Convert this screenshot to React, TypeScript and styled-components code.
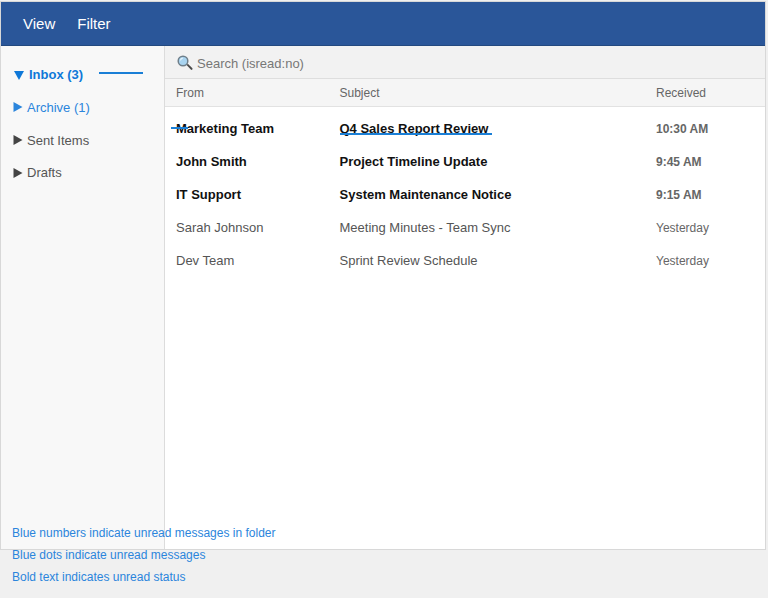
import * as React from "react";
import styled, { createGlobalStyle } from "styled-components";

const GlobalStyle = createGlobalStyle`
  html, body {
    margin: 0;
    padding: 0;
    background: #f0f0f0;
    font-family: "Liberation Sans", Arial, sans-serif;
  }
`;

const Page = styled("div")`
  position: relative;
  width: 768px;
  height: 598px;
  padding: 1px 2px 0 0;
  box-sizing: border-box;
  overflow: hidden;
`;

const Window = styled("div")`
  height: 549px;
  display: flex;
  flex-direction: column;
  background: #fff;
  border: 1px solid #d8d8d8;
  box-sizing: border-box;
`;

const Toolbar = styled("div")`
  flex: 0 0 44px;
  display: flex;
  align-items: center;
  gap: 22px;
  padding-left: 22px;
  box-sizing: border-box;
  background: #2a5699;
  border-bottom: 1px solid #23497f;
`;

const ToolbarItem = styled("span")`
  color: #fff;
  font-size: 15px;
`;

const Body = styled("div")`
  flex: 1;
  display: flex;
  min-height: 0;
`;

const Sidebar = styled("nav")`
  flex: 0 0 164px;
  padding: 12.4px 0 0 12px;
  box-sizing: border-box;
  background: #f8f8f8;
  border-right: 1px solid #dcdcdc;
`;

const Folder = styled("div")<{ $tone: "active" | "unread" | "plain" }>`
  height: 32.67px;
  display: flex;
  align-items: center;
  gap: ${({ $tone }) => ($tone === "active" ? 5 : 4)}px;
  padding-left: ${({ $tone }) => ($tone === "active" ? 1 : 0)}px;
  font-size: 13px;
  font-weight: ${({ $tone }) => ($tone === "active" ? 700 : 400)};
  color: ${({ $tone }) =>
    $tone === "active" ? "#0f78d8" : $tone === "unread" ? "#2b85dc" : "#555"};
`;

const Arrow = styled("svg")`
  width: 10px;
  height: 10px;
  flex: none;
  fill: currentColor;
`;

const PlainArrow = styled(Arrow)`
  fill: #444;
`;

const Main = styled("main")`
  flex: 1;
  display: flex;
  flex-direction: column;
  min-width: 0;
`;

const SearchBar = styled("div")`
  flex: 0 0 33px;
  display: flex;
  align-items: center;
  gap: 4px;
  padding: 2px 0 0 12px;
  box-sizing: border-box;
  background: #f2f2f2;
  border-bottom: 1px solid #dedede;
  font-size: 13px;
  color: #777;
`;

const Columns = "grid-template-columns: 163.5px 316.5px 1fr;";

const HeaderRow = styled("div")`
  flex: 0 0 28px;
  display: grid;
  ${Columns}
  align-items: center;
  padding-left: 11px;
  box-sizing: border-box;
  background: #f5f5f5;
  border-bottom: 1px solid #e2e2e2;
  font-size: 12px;
  color: #666;
`;

const MessageList = styled("div")`
  padding-top: 5px;
`;

const MessageRow = styled("div")<{ $unread: boolean }>`
  height: 33px;
  display: grid;
  ${Columns}
  align-items: center;
  padding-left: 11px;
  font-size: 13px;
  font-weight: ${({ $unread }) => ($unread ? 700 : 400)};
  color: ${({ $unread }) => ($unread ? "#111" : "#555")};
`;

const Received = styled("span")`
  font-size: 12px;
  color: #666;
`;

const Legend = styled("div")`
  position: absolute;
  left: 12px;
  top: 526px;
  display: flex;
  flex-direction: column;
  gap: 8px;
  font-size: 12px;
  line-height: 14px;
  color: #2b85dc;
`;

const Marker = styled("span")<{ $left: number; $top: number; $width: number }>`
  position: absolute;
  left: ${({ $left }) => $left}px;
  top: ${({ $top }) => $top}px;
  width: ${({ $width }) => $width}px;
  height: 2px;
  background: #1a7fd6;
`;

const folders: { label: string; tone: "active" | "unread" | "plain" }[] = [
  { label: "Inbox (3)", tone: "active" },
  { label: "Archive (1)", tone: "unread" },
  { label: "Sent Items", tone: "plain" },
  { label: "Drafts", tone: "plain" },
];

const messages = [
  { from: "Marketing Team", subject: "Q4 Sales Report Review", received: "10:30 AM", unread: true },
  { from: "John Smith", subject: "Project Timeline Update", received: "9:45 AM", unread: true },
  { from: "IT Support", subject: "System Maintenance Notice", received: "9:15 AM", unread: true },
  { from: "Sarah Johnson", subject: "Meeting Minutes - Team Sync", received: "Yesterday", unread: false },
  { from: "Dev Team", subject: "Sprint Review Schedule", received: "Yesterday", unread: false },
];

const FolderArrow = ({ tone }: { tone: string }): React.JSX.Element => {
  if (tone === "active") {
    return (
      <Arrow viewBox="0 0 10 10">
        <path d="M0 1h10L5 10z" />
      </Arrow>
    );
  }
  const Icon = tone === "plain" ? PlainArrow : Arrow;
  return (
    <Icon viewBox="0 0 10 10">
      <path d="M0.5 0l9 5-9 5z" />
    </Icon>
  );
};

const Magnifier = (): React.JSX.Element => (
  <svg width="16" height="16" viewBox="0 0 16 16">
    <path d="M9.6 10l1.2-1.2 4.4 4.2c.5.5.5 1 .1 1.5s-1 .5-1.5.1z" fill="#4a4a4a" />
    <circle cx="6" cy="6" r="4.8" fill="#a9d4f0" stroke="#6f7f8a" strokeWidth="1.5" />
    <path d="M3.4 5.4a3 3 0 0 1 2.4-2.2" fill="none" stroke="#e6f4fc" strokeWidth="1.2" />
  </svg>
);

export default function App(): React.JSX.Element {
  return (
    <Page>
      <GlobalStyle />
      <Window>
        <Toolbar>
          <ToolbarItem>View</ToolbarItem>
          <ToolbarItem>Filter</ToolbarItem>
        </Toolbar>
        <Body>
          <Sidebar>
            {folders.map((f) => (
              <Folder key={f.label} $tone={f.tone}>
                <FolderArrow tone={f.tone} />
                {f.label}
              </Folder>
            ))}
          </Sidebar>
          <Main>
            <SearchBar>
              <Magnifier />
              Search (isread:no)
            </SearchBar>
            <HeaderRow>
              <span>From</span>
              <span>Subject</span>
              <span>Received</span>
            </HeaderRow>
            <MessageList>
              {messages.map((m) => (
                <MessageRow key={m.from} $unread={m.unread}>
                  <span>{m.from}</span>
                  <span>{m.subject}</span>
                  <Received>{m.received}</Received>
                </MessageRow>
              ))}
            </MessageList>
          </Main>
        </Body>
      </Window>
      <Marker $left={99} $top={72} $width={44} />
      <Marker $left={171} $top={127} $width={17} />
      <Marker $left={340} $top={133} $width={152} />
      <Legend>
        <span>Blue numbers indicate unread messages in folder</span>
        <span>Blue dots indicate unread messages</span>
        <span>Bold text indicates unread status</span>
      </Legend>
    </Page>
  );
}
